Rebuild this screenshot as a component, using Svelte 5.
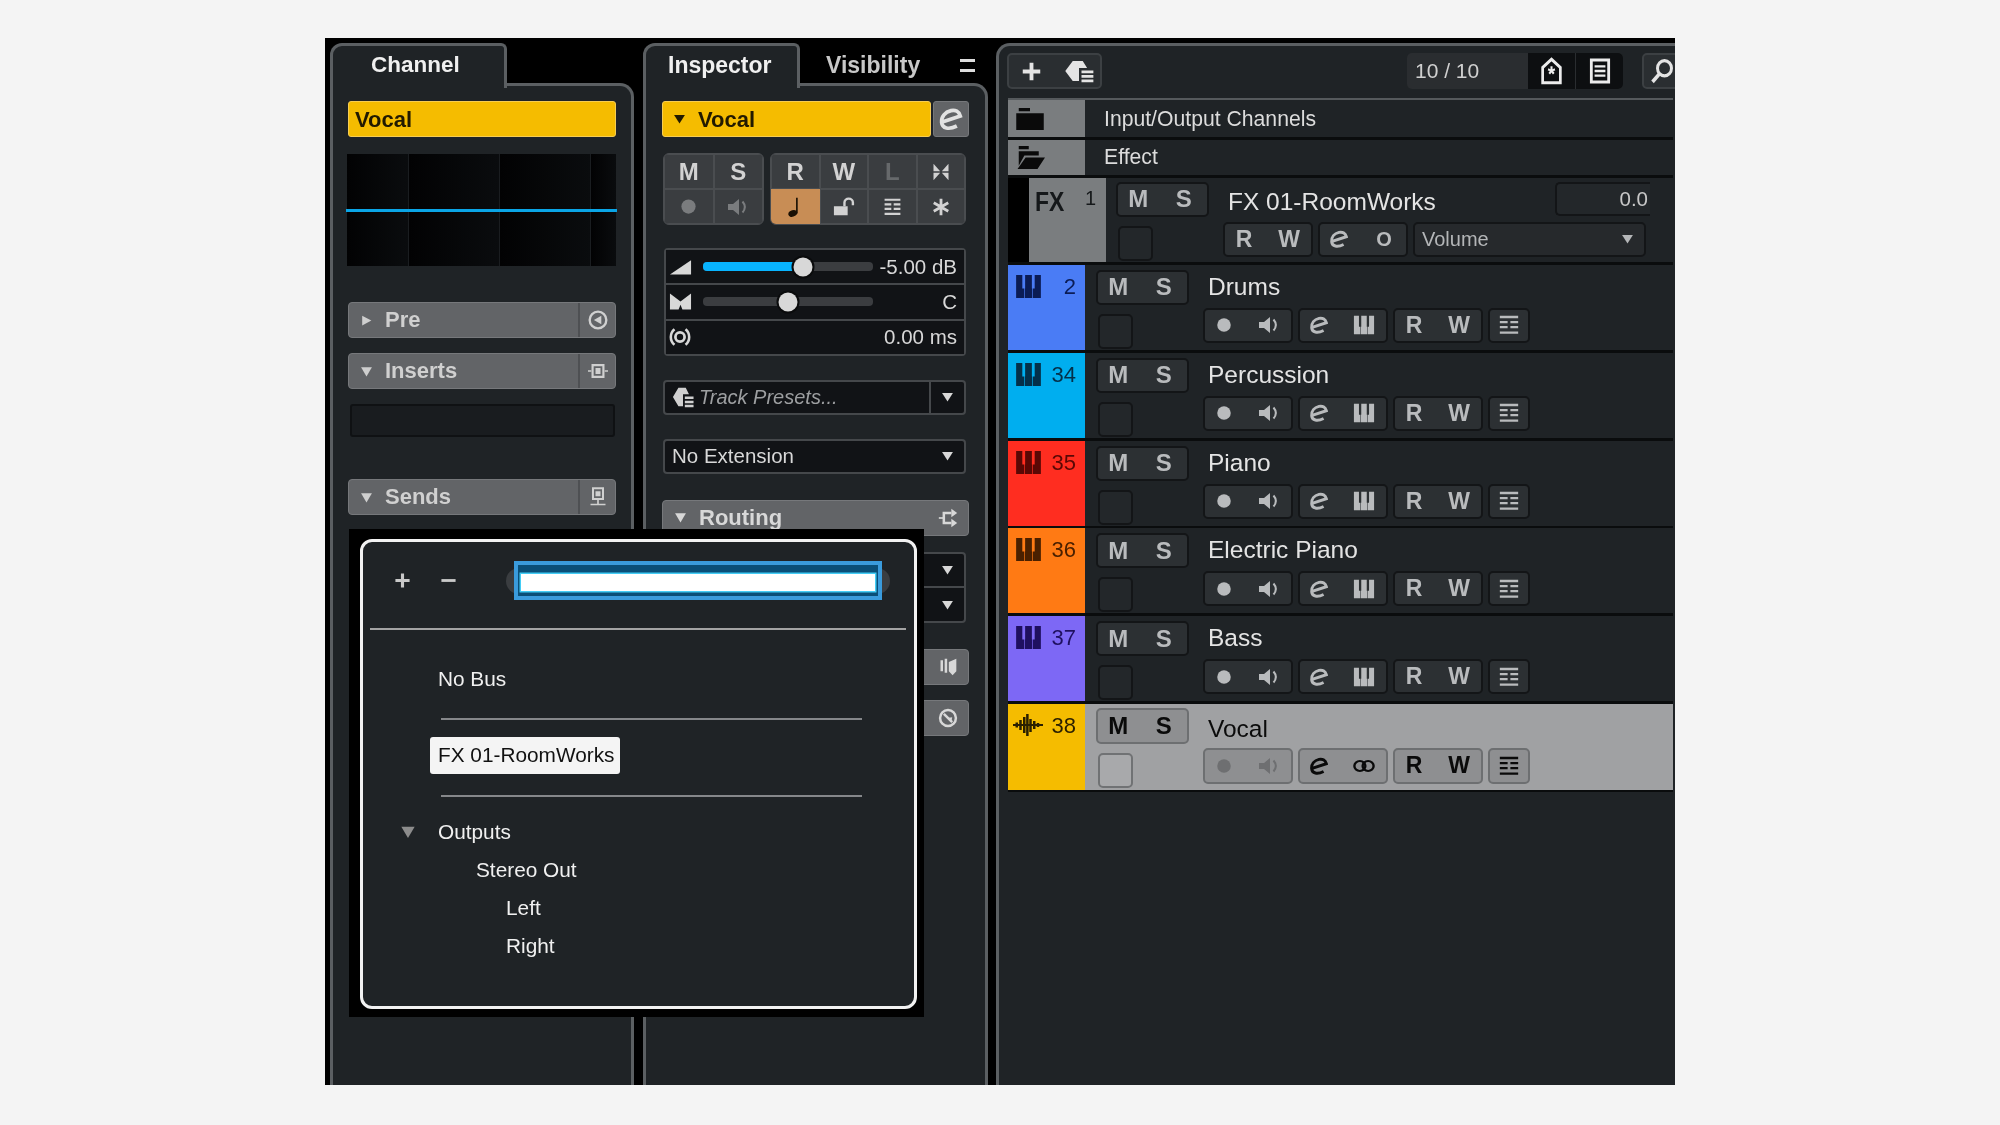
<script>
  const midi = [
    { name: 'Drums', num: '2', color: '#4a7cf5', ink: '#0b1c55' },
    { name: 'Percussion', num: '34', color: '#00aeef', ink: '#04304a' },
    { name: 'Piano', num: '35', color: '#ff2d20', ink: '#5a0805' },
    { name: 'Electric Piano', num: '36', color: '#ff7a14', ink: '#4a2000' },
    { name: 'Bass', num: '37', color: '#7d68f5', ink: '#1f1060' }
  ];
  const topCells = ['M', 'S'];
  const faders = [
    { icon: 'wedge', pct: 59, blue: true, value: '-5.00 dB' },
    { icon: 'panm', pct: 50, blue: false, value: 'C' }
  ];
</script>

{#snippet ic(name, w = 24, h = w)}
  <svg width={w} height={h} viewBox="0 0 24 24" fill="currentColor" stroke="none" aria-hidden="true" preserveAspectRatio="none">
    {#if name === 'e'}
      <path d="M4.5 14.5 20 9.5C19 5.5 15.5 4 12 4.8 7 6 3.5 10 4 15c.5 5 6 6.5 13 3" fill="none" stroke="currentColor" stroke-width="3.2" />
    {:else if name === 'speaker'}
      <path d="M2 9h5l6-5v16l-6-5H2z" /><path d="M16.5 6.5c3 3.5 3 7.5 0 11" fill="none" stroke="currentColor" stroke-width="2" />
    {:else if name === 'rec'}
      <circle cx="12" cy="12" r="9" />
    {:else if name === 'piano'}
      <path d="M1 1h5.5v13H8v9H1zM9 1h6v13h.4v9H8.6v-9H9zM17.5 1H23v22h-7v-9h1.5z" />
    {:else if name === 'list'}
      <path d="M2 2h20v2.6H2zM2 7.5h8.5v2.6H2zM13.5 7.5H22v2.6h-8.5zM2 13h8.5v2.6H2zM13.5 13H22v2.6h-8.5zM2 19h20v2.6H2z" />
    {:else if name === 'note'}
      <ellipse cx="9" cy="19" rx="6" ry="3.6" transform="rotate(-15 9 19)" /><path d="M13.4 2h2.2v17h-2.2z" />
    {:else if name === 'lock'}
      <path d="M1 11h15v11H1z" /><path d="M12.5 11V6.5a4.6 4.6 0 0 1 9.2 0V10" fill="none" stroke="currentColor" stroke-width="2.6" />
    {:else if name === 'star'}
      <path d="M12 2v20M3.3 7l17.4 10M3.3 17l17.4-10" fill="none" stroke="currentColor" stroke-width="3.4" />
    {:else if name === 'bowtie'}
      <path d="M3 2l8 9H3zM21 2l-8 9h8zM3 22l8-9H3zM21 22l-8-9h8z" />
    {:else if name === 'plus'}
      <path d="M12 2v20M2 12h20" fill="none" stroke="currentColor" stroke-width="4.4" />
    {:else if name === 'minus'}
      <path d="M2 12h20" fill="none" stroke="currentColor" stroke-width="4" />
    {:else if name === 'presets'}
      <path d="M7 2h8l3.5 7H12v13H7l-6-10z" /><path d="M14 11.5h9.5v2.8H14zM14 16h9.5v2.8H14zM14 20.5h9.5v2.8H14z" />
    {:else if name === 'home'}
      <path d="M3.5 9 12 2l8.5 7v13h-17z" fill="none" stroke="currentColor" stroke-width="2.6" /><path d="M11 8h2v2.5l2-.8.6 1.800-2 .6 1.300 1.700-1.500 1.100L12 13.200l-1.400 1.700-1.500-1.100 1.300-1.700-2-.6.6-1.800 2 .8z" />
    {:else if name === 'lines'}
      <path d="M4 2.5h16v19H4z" fill="none" stroke="currentColor" stroke-width="2.6" /><path d="M7 7h10v2H7zM7 11h10v2H7zM7 15h10v2H7z" />
    {:else if name === 'search'}
      <circle cx="14.5" cy="9.5" r="7" fill="none" stroke="currentColor" stroke-width="3" /><path d="M9.500 14.500 2.500 22" fill="none" stroke="currentColor" stroke-width="3.5" />
    {:else if name === 'folder'}
      <path d="M3 2h9v3H3zM1 7h22v16H1z" />
    {:else if name === 'folderopen'}
      <path d="M3 1h8v3H3zM3 6h16v4H7.500L3 20zM8.500 12H24l-6 11H2z" />
    {:else if name === 'wedge'}
      <path d="M1 22 23 4v18z" />
    {:else if name === 'panm'}
      <path d="M1 2l11 10L23 2v20H14l-2-6-2 6H1z" />
    {:else if name === 'delay'}
      <circle cx="12" cy="12" r="5" fill="none" stroke="currentColor" stroke-width="3" /><path d="M6 3.5a11 11 0 0 0 0 17M18 3.5a11 11 0 0 1 0 17" fill="none" stroke="currentColor" stroke-width="2.8" />
    {:else if name === 'pre'}
      <circle cx="12" cy="12" r="10" fill="none" stroke="currentColor" stroke-width="2.8" /><path d="M16 7v10l-9-5z" />
    {:else if name === 'insert'}
      <path d="M5.5 5h13v14h-13z" fill="none" stroke="currentColor" stroke-width="2.6" /><path d="M9 8.500h6v7H9zM0 11h4v2H0zM20 11h4v2h-4z" />
    {:else if name === 'send'}
      <path d="M6 1.500h12v13H6z" fill="none" stroke="currentColor" stroke-width="2.4" /><path d="M9 5h6v6H9zM11 15h2v5h-2zM3 20h18v2H3z" />
    {:else if name === 'route'}
      <path d="M1 11h5v2H1z" /><path d="M7 12V6h9M7 12v6h9" fill="none" stroke="currentColor" stroke-width="3" /><path d="M16 1l7 5-7 5zM16 13l7 5-7 5z" />
    {:else if name === 'book'}
      <path d="M3 4h3v13H3zM8 2h3v17H8zM13 6l9-4v15l-4.500 5-4.500-5z" />
    {:else if name === 'clock'}
      <circle cx="12" cy="12" r="9.5" fill="none" stroke="currentColor" stroke-width="3" /><path d="M7 7l10 10" fill="none" stroke="currentColor" stroke-width="3" /><path d="M11 12l6-1-1 6z" />
    {:else if name === 'link'}
      <circle cx="7.5" cy="12" r="6" fill="none" stroke="currentColor" stroke-width="2.6" /><circle cx="16.5" cy="12" r="6" fill="none" stroke="currentColor" stroke-width="2.6" />
    {:else if name === 'wave'}
      <path d="M0 12h24M3 9.500v5M6 7v10M9 4v16M11.500 1v22M14 6v13M17 8v8M20 10v4" fill="none" stroke="currentColor" stroke-width="2" />
    {:else if name === 'down'}
      <path d="M2 4h20L12 21z" />
    {:else if name === 'right'}
      <path d="M4 3l17 9-17 9z" />
    {/if}
  </svg>
{/snippet}

{#snippet sec(label, icon, open = true)}
  <div class="sec">
    <div class="sec-main">
      <span class="sec-tri">{@render ic(open ? 'down' : 'right', 13, 13)}</span>
      <span>{label}</span>
    </div>
    <div class="sec-end">{@render ic(icon, 20, 20)}</div>
  </div>
{/snippet}

{#snippet msGroup()}
  <div class="grp ms">
    {#each topCells as c}<span class="cell">{c}</span>{/each}
  </div>
{/snippet}

{#snippet ctlButtons(second)}
  <div class="grp w89 muted">
    <span class="cell">{@render ic('rec', 18, 18)}</span>
    <span class="cell">{@render ic('speaker', 24, 24)}</span>
  </div>
  <div class="grp w89">
    <span class="cell">{@render ic('e', 22, 22)}</span>
    <span class="cell">{@render ic(second, 22, 20)}</span>
  </div>
  <div class="grp w89 rw">
    <span class="cell">R</span>
    <span class="cell">W</span>
  </div>
  <div class="grp w42">
    <span class="cell">{@render ic('list', 22, 22)}</span>
  </div>
{/snippet}

<div class="page">
  <div class="app">
    <section class="panel channel">
      <div class="tabs">
        <div class="tab">Channel</div>
      </div>
      <div class="body">
        <div class="namebar">Vocal</div>
        <div class="meter">
          <span class="meter-line"></span>
          <span class="meter-col c1"></span><span class="meter-col"></span><span class="meter-col"></span><span class="meter-col last"></span>
        </div>
        <div class="pre-wrap">{@render sec('Pre', 'pre', false)}</div>
        <div class="gap16">{@render sec('Inserts', 'insert')}</div>
        <div class="slot"></div>
        <div class="sends-wrap">{@render sec('Sends', 'send')}</div>
      </div>
    </section>

    <section class="panel inspector">
      <div class="tabs">
        <div class="tab insp-tab">Inspector</div>
        <div class="tab-off">Visibility</div>
        <div class="tab-menu"><span></span><span></span></div>
      </div>
      <div class="body insp-body">
        <div class="ins-name">
          <div class="namebar grow"><span class="name-tri">{@render ic('down', 13, 12)}</span>Vocal</div>
          <div class="e-btn">{@render ic('e', 28, 28)}</div>
        </div>

        <div class="cell-row">
          <div class="cells c2">
            <span>M</span><span>S</span>
            <span class="dim">{@render ic('rec', 19, 19)}</span><span class="dim">{@render ic('speaker', 24, 24)}</span>
          </div>
          <div class="cells c4">
            <span>R</span><span>W</span><span class="dim2">L</span><span>{@render ic('bowtie', 20, 20)}</span>
            <span class="orange">{@render ic('note', 18, 22)}</span><span>{@render ic('lock', 22, 20)}</span><span>{@render ic('list', 19, 20)}</span><span>{@render ic('star', 20, 20)}</span>
          </div>
        </div>

        <div class="faders">
          {#each faders as f}
            <div class="fader">
              <span class="f-icon">{@render ic(f.icon, 23, 19)}</span>
              <div class="track">
                {#if f.blue}<div class="fill" style="width:{f.pct - 6}%"></div>{/if}
                <div class="knob" style="left:{f.pct}%"></div>
              </div>
              <span class="f-val">{f.value}</span>
            </div>
          {/each}
          <div class="fader">
            <span class="f-icon">{@render ic('delay', 22, 22)}</span>
            <span class="f-val wide">0.00 ms</span>
          </div>
        </div>

        <div class="drop presets">
          <span class="p-icon">{@render ic('presets', 22, 22)}</span>
          <span class="p-text">Track Presets...</span>
          <span class="drop-end">{@render ic('down', 13, 12)}</span>
        </div>
        <div class="drop ext">
          <span class="p-text2">No Extension</span>
          <span class="drop-arrow">{@render ic('down', 13, 12)}</span>
        </div>
        <div class="routing">
          <div class="rt-main"><span class="sec-tri2">{@render ic('down', 13, 13)}</span>Routing</div>
          <span class="rt-icon">{@render ic('route', 20, 20)}</span>
        </div>
        <div class="route-rows">
          <div class="rr">{@render ic('down', 13, 12)}</div>
          <div class="rr">{@render ic('down', 13, 12)}</div>
        </div>
        <div class="mini first"><span>{@render ic('book', 20, 20)}</span></div>
        <div class="mini"><span>{@render ic('clock', 20, 20)}</span></div>
      </div>
    </section>

    <section class="tracks">
      <div class="toolbar">
        <div class="tb-group">
          <span>{@render ic('plus', 21, 21)}</span>
          <span>{@render ic('presets', 30, 24)}</span>
        </div>
        <div class="count">
          <span class="count-num">10 / 10</span>
          <span class="tb-black">{@render ic('home', 25, 28)}</span>
          <span class="tb-black">{@render ic('lines', 26, 28)}</span>
        </div>
        <div class="tb-search">{@render ic('search', 24, 26)}</div>
      </div>
      <div class="list">
        <div class="folder h37">
          <div class="f-col">{@render ic('folder', 30, 25)}</div>
          <span>Input/Output Channels</span>
        </div>
        <div class="folder h35">
          <div class="f-col">{@render ic('folderopen', 30, 25)}</div>
          <span>Effect</span>
        </div>
        <div class="fx-row">
          <div class="fx-black"></div>
          <div class="fx-col"><b>FX</b><span>1</span></div>
          <div class="ctl fx-ctl">
            <div class="grp ms">
              <span class="cell">M</span><span class="cell">S</span>
            </div>
            <div class="square"></div>
          </div>
          <div class="main fx-main">
            <div class="fx-top">
              <span class="tname">FX 01-RoomWorks</span>
              <span class="valbox">0.0</span>
            </div>
            <div class="btns">
              <div class="grp w89 rw"><span class="cell">R</span><span class="cell">W</span></div>
              <div class="grp w89">
                <span class="cell">{@render ic('e', 22, 22)}</span>
                <span class="cell letter">O</span>
              </div>
              <div class="grp vol"><span>Volume</span>{@render ic('down', 13, 12)}</div>
            </div>
          </div>
        </div>
        {#each midi as t}
          <div class="trow">
            <div class="color" style="background:{t.color};color:{t.ink}">
              <span class="glyph">{@render ic('piano', 27, 25)}</span>
              <span class="num">{t.num}</span>
            </div>
            <div class="ctl">
              {@render msGroup()}
              <div class="square"></div>
            </div>
            <div class="main">
              <div class="tname line">{t.name}</div>
              <div class="btns">{@render ctlButtons('piano')}</div>
            </div>
          </div>
        {/each}
        <div class="trow selected">
          <div class="color sel-color">
            <span class="glyph">{@render ic('wave', 30, 24)}</span>
            <span class="num">38</span>
          </div>
          <div class="ctl">
            {@render msGroup()}
            <div class="square"></div>
          </div>
          <div class="main">
            <div class="tname line">Vocal</div>
            <div class="btns">{@render ctlButtons('link')}</div>
          </div>
        </div>
      </div>
    </section>

    <div class="pop-back">
      <div class="popup">
        <div class="pop-head">
          <span class="pm plus">{@render ic('plus', 17, 17)}</span>
          <span class="pm minus">{@render ic('minus', 17, 17)}</span>
          <div class="field-wrap"><div class="field"><div class="field-inner"></div></div></div>
        </div>
        <div class="rule main-rule"></div>
        <div class="pop-item nobus">No Bus</div>
        <div class="rule sub-rule r1"></div>
        <div class="pop-item hi">FX 01-RoomWorks</div>
        <div class="rule sub-rule r2"></div>
        <div class="tree">
          <div class="tree-row"><span class="tree-tri">{@render ic('down', 16, 16)}</span>Outputs</div>
          <div class="tree-row l2">Stereo Out</div>
          <div class="tree-row l3">Left</div>
          <div class="tree-row l3">Right</div>
        </div>
      </div>
    </div>
  </div>
</div>

<style>
  :global(body) {
    margin: 0;
    background: #f4f4f4;
  }
  .page {
    width: 2000px;
    height: 1125px;
    box-sizing: border-box;
    padding: 38px 325px 40px;
    font-family: "Liberation Sans", Arial, sans-serif;
    color: #d8d8d8;
  }
  .app {
    position: relative;
    width: 1350px;
    height: 1047px;
    box-sizing: border-box;
    padding: 5px 0 0 5px;
    background: #000;
    display: flex;
    overflow: hidden;
    filter: blur(0.5px);
  }
  svg {
    display: block;
    flex: none;
  }
  .panel {
    display: flex;
    flex-direction: column;
    flex: none;
  }
  .channel {
    width: 304px;
    margin-right: 9px;
  }
  .inspector {
    width: 345px;
    margin-right: 8px;
  }
  .tabs {
    display: flex;
    height: 40px;
    flex: none;
  }
  .tab {
    position: relative;
    z-index: 1;
    box-sizing: border-box;
    width: 177px;
    height: 45px;
    border: 3px solid #5b5f62;
    border-bottom: 0;
    border-radius: 12px 6px 0 0;
    background: #1f2326;
    font-size: 22.5px;
    font-weight: 700;
    color: #f0f0f0;
    padding: 6px 0 0 38px;
  }
  .insp-tab {
    width: 157px;
    padding-left: 22px;
    font-size: 23px;
  }
  .tab-off {
    width: 100px;
    padding: 9px 0 0 26px;
    font-size: 23px;
    font-weight: 700;
    color: #c8c8c8;
    white-space: nowrap;
  }
  .tab-menu {
    margin: 16px 0 0 34px;
    display: flex;
    flex-direction: column;
    gap: 7px;
  }
  .tab-menu span {
    width: 15px;
    height: 3px;
    background: #ddd;
  }
  .body {
    flex: 1;
    box-sizing: border-box;
    border: 3px solid #5b5f62;
    border-bottom: 0;
    border-radius: 0 14px 0 0;
    background: #1f2326;
    padding: 15px 15px 0;
  }
  .insp-body {
    padding: 15px 16px 0 16px;
  }
  .namebar {
    height: 36px;
    box-sizing: border-box;
    background: #f5bc00;
    border: 1px solid #f7cd52;
    border-radius: 3px;
    color: #221a00;
    font-size: 22px;
    font-weight: 700;
    line-height: 33px;
    padding-left: 6px;
    display: flex;
    align-items: center;
  }
  .meter {
    position: relative;
    height: 112px;
    margin: 17px 0 0 -1px;
    width: 269px;
    background: #040506;
    display: flex;
  }
  .meter-line {
    position: absolute;
    left: -1px;
    right: -1px;
    top: 55px;
    height: 3px;
    background: #0aa5e6;
  }
  .meter-col {
    width: 90px;
    border-right: 1px solid #1a1d20;
    flex: none;
    background: linear-gradient(90deg, #020203, #0a0c0e);
  }
  .meter-col.c1 {
    width: 61px;
  }
  .meter-col.last {
    width: 2px;
    flex: 1;
    border: 0;
  }
  .pre-wrap {
    margin-top: 36px;
  }
  .gap16 {
    margin-top: 15px;
  }
  .sends-wrap {
    margin-top: 42px;
  }
  .sec {
    height: 36px;
    box-sizing: border-box;
    display: flex;
    background: #626467;
    border: 1px solid #76787b;
    border-radius: 4px;
    color: #d0d0d0;
    font-size: 22px;
    font-weight: 700;
  }
  .sec-main {
    flex: 1;
    display: flex;
    align-items: center;
    padding-left: 11px;
  }
  .sec-tri {
    width: 25px;
    color: #cfcfcf;
  }
  .sec-end {
    width: 37px;
    border-left: 2px solid #4e5053;
    display: flex;
    align-items: center;
    justify-content: center;
    box-sizing: border-box;
  }
  .slot {
    height: 33px;
    margin: 15px 1px 0 2px;
    background: #191c1f;
    border: 2px solid #0f1113;
    box-sizing: border-box;
    border-radius: 3px;
  }
  .ins-name {
    display: flex;
    gap: 2px;
  }
  .grow {
    flex: 1;
    padding-left: 0;
  }
  .name-tri {
    margin: 0 12px 0 10px;
  }
  .e-btn {
    width: 36px;
    height: 36px;
    background: #626467;
    border: 1px solid #76787b;
    border-radius: 3px;
    box-sizing: border-box;
    display: flex;
    align-items: center;
    justify-content: center;
    color: #e2e2e2;
  }
  .cell-row {
    display: flex;
    gap: 6px;
    margin-top: 16px;
    margin-left: 1px;
    width: 303px;
  }
  .cells {
    display: grid;
    grid-auto-rows: 35px;
    border-radius: 6px;
    overflow: hidden;
    background: #3a3d40;
    border: 1px solid #4a4d50;
  }
  .c2 {
    grid-template-columns: repeat(2, 1fr);
    width: 101px;
    flex: none;
    box-sizing: border-box;
  }
  .c4 {
    grid-template-columns: repeat(4, 1fr);
    flex: 1;
  }
  .cells span {
    display: flex;
    align-items: center;
    justify-content: center;
    font-size: 24px;
    font-weight: 700;
    color: #d2d2d2;
    box-shadow: inset 0 0 0 1px #4a4d50;
  }
  .cells .dim {
    color: #7a7c7e;
  }
  .cells .dim2 {
    color: #66696b;
  }
  .cells .orange {
    background: #c88d55;
    color: #1a1004;
    box-shadow: none;
  }
  .faders {
    margin: 23px 0 0 2px;
    width: 302px;
    box-sizing: border-box;
    border: 2px solid #45484b;
    border-radius: 4px;
    background: #45484b;
    display: flex;
    flex-direction: column;
    gap: 2px;
  }
  .fader {
    height: 33.3px;
    background: #111316;
    display: flex;
    align-items: center;
    position: relative;
    color: #d8d8d8;
  }
  .f-icon {
    width: 37px;
    padding-left: 3px;
    box-sizing: border-box;
    flex: none;
  }
  .track {
    position: relative;
    width: 170px;
    height: 9px;
    background: #3b3d40;
    border-radius: 4px;
    flex: none;
  }
  .fill {
    height: 100%;
    background: #08b4ff;
    border-radius: 4px 0 0 4px;
  }
  .knob {
    position: absolute;
    top: 50%;
    width: 19px;
    height: 19px;
    transform: translate(-50%, -50%);
    border-radius: 50%;
    background: #d8d8d8;
    box-shadow: 0 0 0 2px #0a0b0c;
  }
  .f-val {
    flex: 1;
    text-align: right;
    padding-right: 7px;
    font-size: 20.5px;
    white-space: nowrap;
  }
  .drop {
    display: flex;
    align-items: center;
    height: 35px;
    box-sizing: border-box;
    background: #111316;
    border: 2px solid #45484b;
    border-radius: 4px;
    margin-left: 1px;
    width: 303px;
    font-size: 20.5px;
  }
  .presets {
    margin-top: 24px;
  }
  .p-icon {
    width: 34px;
    padding-left: 7px;
    box-sizing: border-box;
    color: #d0d0d0;
  }
  .p-text {
    flex: 1;
    font-size: 20px;
    font-style: italic;
    color: #9d9fa1;
  }
  .drop-end {
    width: 35px;
    height: 100%;
    border-left: 2px solid #45484b;
    display: flex;
    align-items: center;
    justify-content: center;
    box-sizing: border-box;
  }
  .ext {
    margin-top: 24px;
  }
  .p-text2 {
    flex: 1;
    padding-left: 7px;
  }
  .drop-arrow {
    padding-right: 10px;
  }
  .routing {
    margin-top: 26px;
    height: 36px;
    box-sizing: border-box;
    background: #626467;
    border: 1px solid #76787b;
    border-radius: 4px;
    display: flex;
    align-items: center;
    justify-content: space-between;
    padding: 0 10px 0 11px;
    color: #d8d8d8;
    font-size: 22px;
    font-weight: 700;
  }
  .rt-main {
    display: flex;
    align-items: center;
  }
  .sec-tri2 {
    width: 25px;
  }
  .route-rows {
    margin-top: 16px;
    margin-left: 1px;
    width: 303px;
    background: #111316;
    border: 2px solid #45484b;
    border-radius: 4px;
    box-sizing: border-box;
  }
  .rr {
    height: 32.5px;
    display: flex;
    align-items: center;
    justify-content: flex-end;
    padding-right: 10px;
    border-bottom: 2px solid #45484b;
    box-sizing: content-box;
  }
  .rr:last-child {
    border-bottom: 0;
  }
  .mini {
    margin-top: 15px;
    height: 36px;
    background: #626467;
    border: 1px solid #76787b;
    border-radius: 4px;
    box-sizing: border-box;
    display: flex;
    align-items: center;
    justify-content: flex-end;
    padding-right: 10px;
    color: #d8d8d8;
  }
  .mini.first {
    margin-top: 26px;
  }

  .tracks {
    flex: 1;
    min-width: 0;
    overflow: hidden;
    box-sizing: border-box;
    border-left: 3px solid #5b5f62;
    border-top: 3px solid #5b5f62;
    border-radius: 14px 0 0 0;
    background: #1f2326;
    padding: 7px 0 0 8px;
  }
  .toolbar {
    display: flex;
    align-items: flex-start;
    height: 36px;
    color: #e4e4e4;
  }
  .tb-group {
    width: 95px;
    height: 36px;
    box-sizing: border-box;
    background: #2a2e31;
    border: 2px solid #3c4043;
    border-radius: 5px;
    display: flex;
    align-items: center;
    justify-content: space-between;
    padding: 0 6px 0 12px;
    flex: none;
  }
  .count {
    margin-left: 305px;
    width: 216px;
    height: 36px;
    display: flex;
    flex: none;
    background: #2a2d30;
    border-radius: 5px;
    overflow: hidden;
  }
  .count-num {
    width: 121px;
    padding-left: 8px;
    box-sizing: border-box;
    font-size: 21px;
    line-height: 36px;
    color: #d0d0d0;
  }
  .tb-black {
    width: 47px;
    background: #0d0f11;
    margin-left: 1px;
    display: flex;
    align-items: center;
    justify-content: center;
    color: #ececec;
  }
  .tb-search {
    margin-left: 19px;
    width: 60px;
    height: 36px;
    box-sizing: border-box;
    flex: none;
    background: #2a2e31;
    border: 2px solid #3c4043;
    border-radius: 5px;
    display: flex;
    align-items: center;
    padding-left: 6px;
  }
  .list {
    margin-top: 9px;
    margin-left: 1px;
    margin-right: 2px;
    border-top: 2px solid #55595c;
    background: #0a0c0d;
    display: flex;
    flex-direction: column;
    gap: 2.8px;
    padding-bottom: 2px;
  }
  .folder {
    display: flex;
    align-items: center;
    background: #1f2326;
    font-size: 21.2px;
    color: #dcdcdc;
  }
  .h37 {
    height: 37px;
  }
  .h35 {
    height: 35px;
  }
  .f-col {
    width: 77px;
    height: 100%;
    background: #7a7d7f;
    display: flex;
    align-items: center;
    padding-left: 7px;
    box-sizing: border-box;
    margin-right: 19px;
    color: #0a0a0a;
  }
  .fx-row {
    display: flex;
    height: 84.6px;
    background: #1f2326;
  }
  .fx-black {
    width: 21px;
    background: #000;
  }
  .fx-col {
    width: 77px;
    background: #7a7d7f;
    color: #15181a;
    display: flex;
    align-items: flex-start;
    justify-content: space-between;
    padding: 9px 10px 0 6px;
    box-sizing: border-box;
    font-size: 20px;
  }
  .fx-col b {
    font-size: 27px;
    transform: scaleX(0.85);
    transform-origin: left;
  }
  .ctl {
    width: 118px;
    padding: 5px 0 0 11px;
    box-sizing: border-box;
    display: flex;
    flex-direction: column;
    flex: none;
  }
  .fx-ctl {
    width: 117px;
    padding: 4px 0 0 10px;
  }
  .grp {
    height: 35px;
    box-sizing: border-box;
    display: flex;
    align-items: center;
    background: #2c3033;
    border: 2px solid #131517;
    border-radius: 5px;
    color: #b9bbbd;
    flex: none;
  }
  .cell {
    flex: 1;
    display: flex;
    align-items: center;
    justify-content: center;
    font-size: 24px;
    font-weight: 700;
  }
  .ms {
    width: 93px;
  }
  .ms .cell:first-child {
    flex: 0.88;
  }
  .ms .cell:last-child {
    padding-left: 2px;
  }
  .rw .cell {
    font-size: 23px;
  }
  .letter {
    font-size: 20px;
  }
  .w89 {
    width: 90px;
  }
  .w89 .cell:first-child {
    flex: none;
    width: 38px;
  }
  .w89 .cell:last-child {
    padding-left: 4px;
  }
  .w42 {
    width: 42px;
  }
  .square {
    width: 35px;
    height: 35px;
    margin: 9px 0 0 2px;
    box-sizing: border-box;
    background: #23272a;
    border: 2px solid #131517;
    border-radius: 5px;
  }
  .main {
    flex: 1;
    min-width: 0;
    padding-top: 5px;
  }
  .tname {
    font-size: 24.5px;
    color: #e4e4e4;
    white-space: nowrap;
  }
  .line {
    height: 38px;
    line-height: 34px;
    padding-left: 5px;
  }
  .btns {
    display: flex;
    gap: 5px;
  }
  .fx-main {
    padding-top: 4px;
  }
  .fx-top {
    display: flex;
    height: 40px;
    padding-left: 5px;
  }
  .fx-top .tname {
    line-height: 40px;
    width: 327px;
    flex: none;
  }
  .valbox {
    width: 95px;
    height: 34px;
    box-sizing: border-box;
    background: #23272a;
    border: 2px solid #131517;
    border-right: 0;
    border-radius: 5px 0 0 5px;
    text-align: right;
    line-height: 30px;
    padding-right: 2px;
    font-size: 20.5px;
    color: #c8c8c8;
  }
  .vol {
    width: 233px;
    padding: 0 10px 0 7px;
    justify-content: space-between;
    font-size: 20px;
    color: #b4b6b8;
    background: #26292c;
  }
  .trow {
    display: flex;
    height: 85px;
    background: #1f2326;
  }
  .color {
    width: 77px;
    flex: none;
    box-sizing: border-box;
    padding: 9px 9px 0 7px;
    display: flex;
    justify-content: space-between;
  }
  .num {
    font-size: 22px;
    line-height: 22px;
    margin-top: 2px;
  }
  .sel-color {
    background: #f5bc00;
    color: #2a1f00;
    padding-left: 5px;
  }
  .selected {
    height: 86px;
    background: #a0a1a3;
    color: #0a0a0a;
  }
  .selected .tname {
    color: #0b0b0b;
  }
  .selected .grp {
    background: #8e8f91;
    border-color: #6d6f71;
    color: #0a0a0a;
    height: 36px;
  }
  .selected .muted {
    color: #6e6f71;
  }
  .selected .square {
    background: #a8a9ab;
    border-color: #707274;
  }
  .selected .line {
    line-height: 37px;
  }
  .selected .ctl {
    padding-top: 4px;
  }
  .selected .main {
    padding-top: 6px;
  }

  .pop-back {
    position: absolute;
    left: 24px;
    top: 491px;
    width: 575px;
    height: 488px;
    box-sizing: border-box;
    background: #000;
    padding: 10px 7px 8px 11px;
  }
  .popup {
    height: 100%;
    box-sizing: border-box;
    background: #1f2326;
    border: 3.5px solid #f2f2f2;
    border-radius: 12px;
    color: #f0f0f0;
    font-size: 20.8px;
  }
  .pop-head {
    display: flex;
    height: 39px;
    padding: 19px 0 28px;
    align-items: center;
  }
  .pm {
    color: #c9c9c9;
  }
  .plus {
    margin-left: 31px;
  }
  .minus {
    margin-left: 29px;
  }
  .field-wrap {
    position: relative;
    margin-left: 57px;
    width: 368px;
    height: 39px;
  }
  .field-wrap::before {
    content: "";
    position: absolute;
    left: -8px;
    right: -8px;
    top: 7px;
    height: 26px;
    background: #3a3d40;
    border-radius: 13px;
  }
  .field {
    position: relative;
    height: 100%;
    box-sizing: border-box;
    background: #0a4f78;
    border: 4px solid #3a9bdc;
    padding: 9px 3px 5px;
  }
  .field-inner {
    height: 100%;
    background: #fff;
    box-shadow: 0 0 0 1.5px #43cdf6;
  }
  .rule {
    height: 2px;
    background: #85878a;
  }
  .main-rule {
    margin: 0 8px 0 7px;
    background: #a3a3a3;
  }
  .sub-rule {
    margin: 0 52px 0 78px;
  }
  .pop-item {
    height: 38px;
    line-height: 38px;
  }
  .nobus {
    margin: 30px 0 20px 75px;
  }
  .hi {
    margin: 17px 0 21px 67px;
    width: 190px;
    height: 37px;
    line-height: 36px;
    padding-left: 8px;
    box-sizing: border-box;
    background: #f4f4f4;
    color: #111;
    border-radius: 3px;
    white-space: nowrap;
  }
  .tree {
    margin-top: 16px;
  }
  .tree-row {
    height: 38px;
    line-height: 38px;
    display: flex;
    align-items: center;
    padding-left: 37px;
  }
  .tree-tri {
    width: 38px;
    color: #8c8c8c;
  }
  .l2 {
    padding-left: 113px;
  }
  .l3 {
    padding-left: 143px;
  }
</style>
